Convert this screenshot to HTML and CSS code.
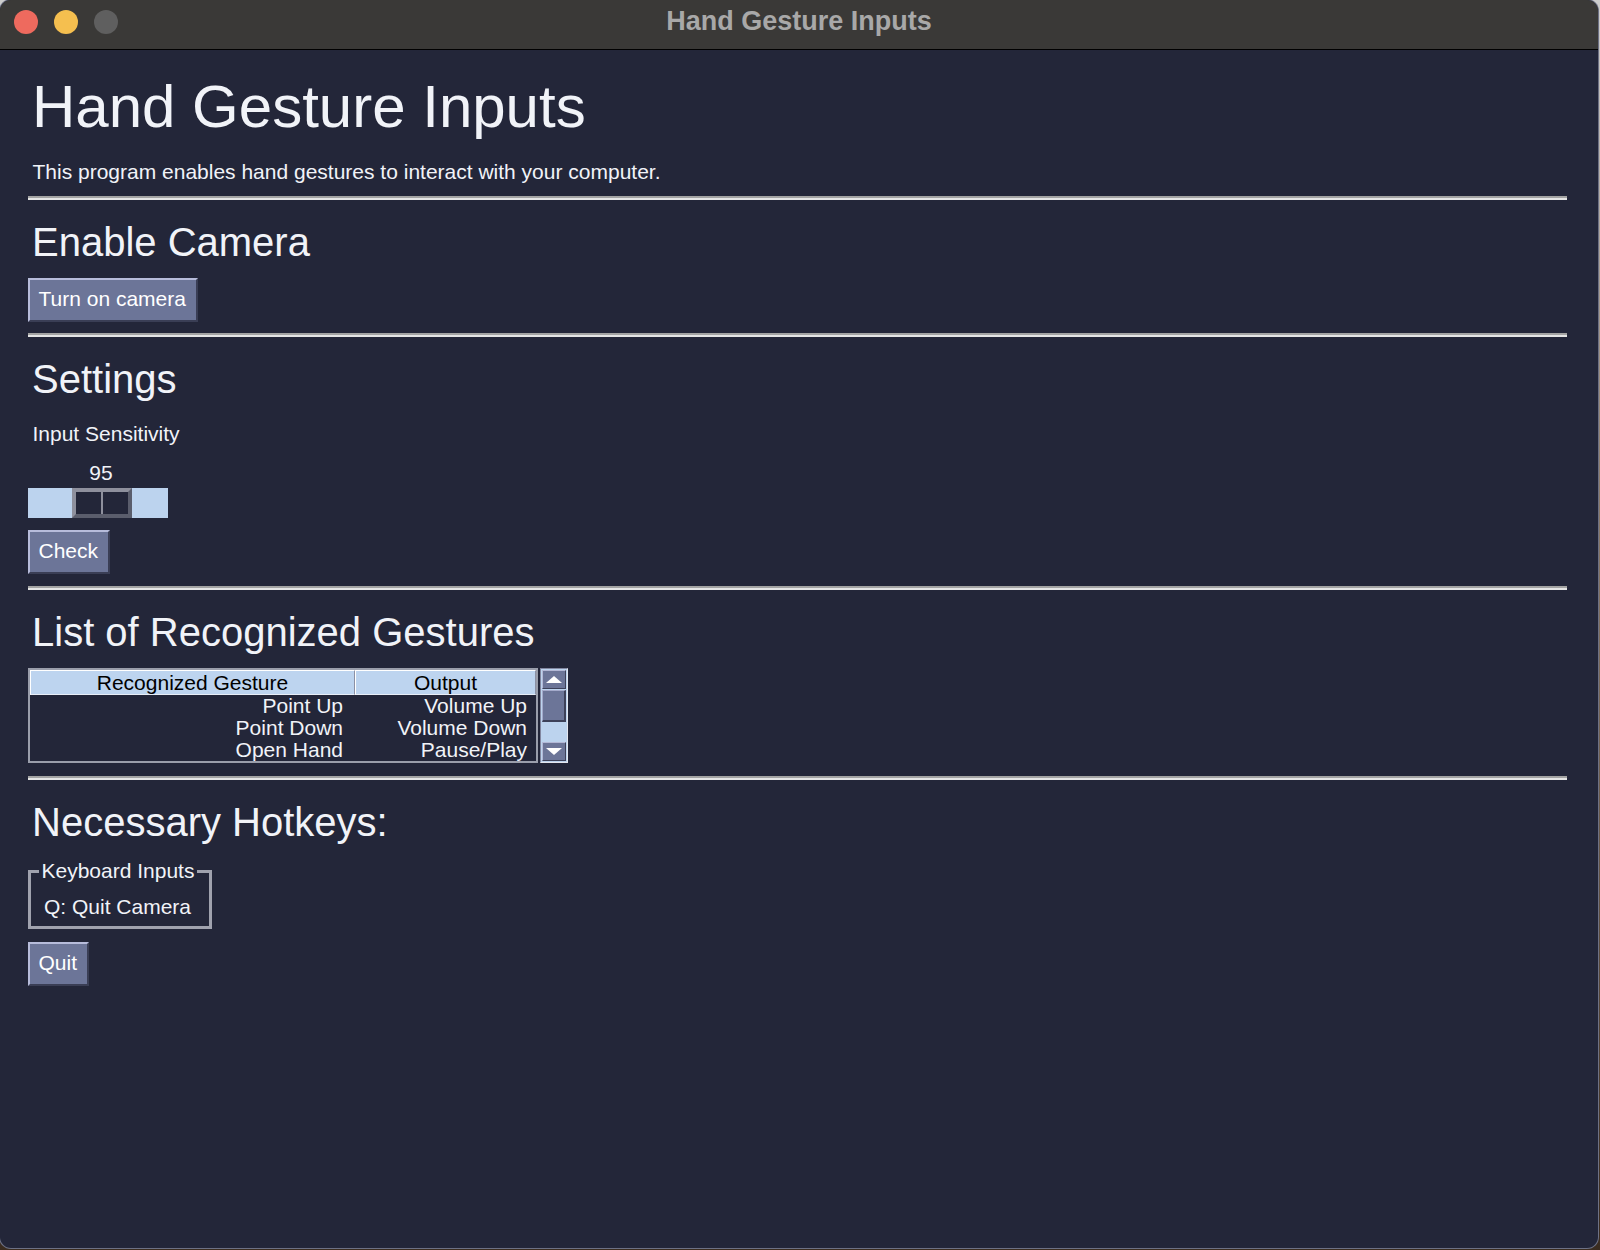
FILE: index.html
```html
<!DOCTYPE html>
<html lang="en">
<head>
<meta charset="utf-8">
<title>Hand Gesture Inputs</title>
<link rel="stylesheet" href="styles.css">
</head>
<body>
<div class="window">
  <div class="titlebar">
    <div class="lights">
      <span class="light red"></span>
      <span class="light yellow"></span>
      <span class="light gray"></span>
    </div>
    <div class="wtitle">Hand Gesture Inputs</div>
    <div></div>
  </div>
  <main class="content">
    <h1 class="main-title">Hand Gesture Inputs</h1>
    <p class="subtitle">This program enables hand gestures to interact with your computer.</p>
    <hr class="sep">
    <h2 class="section">Enable Camera</h2>
    <button class="btn">Turn on camera</button>
    <hr class="sep sep-tight">
    <h2 class="section">Settings</h2>
    <div class="label">Input Sensitivity</div>
    <div class="scale">
      <div class="scale-value">95</div>
      <div class="trough">
        <div class="handle"><span class="half"></span><span class="divider"></span><span class="half"></span></div>
      </div>
    </div>
    <button class="btn">Check</button>
    <hr class="sep">
    <h2 class="section">List of Recognized Gestures</h2>
    <div class="tree-wrap">
      <div class="tree">
        <div class="tree-head">
          <div class="th c1">Recognized Gesture</div>
          <div class="th c2">Output</div>
        </div>
        <div class="tree-row"><div class="td c1">Point Up</div><div class="td c2">Volume Up</div></div>
        <div class="tree-row"><div class="td c1">Point Down</div><div class="td c2">Volume Down</div></div>
        <div class="tree-row"><div class="td c1">Open Hand</div><div class="td c2">Pause/Play</div></div>
      </div>
      <div class="scrollbar">
        <div class="sb-btn"><span class="tri-up"></span></div>
        <div class="sb-thumb"></div>
        <div class="sb-space"></div>
        <div class="sb-btn"><span class="tri-down"></span></div>
      </div>
    </div>
    <hr class="sep sep-wide">
    <h2 class="section">Necessary Hotkeys:</h2>
    <fieldset class="hotkeys">
      <legend>Keyboard Inputs</legend>
      <div class="hotkey-item">Q: Quit Camera</div>
    </fieldset>
    <button class="btn btn-quit">Quit</button>
  </main>
</div>
</body>
</html>
```

FILE: styles.css
```css
html, body {
  margin: 0;
  padding: 0;
}

body {
  width: 1600px;
  height: 1250px;
  overflow: hidden;
  background: linear-gradient(#cdcdcd, #8a7a6a 40%, #3a2c20);
}

.window {
  width: 1598px;
  height: 1248px;
  border-radius: 11px;
  overflow: hidden;
  background: #232639;
  display: flex;
  flex-direction: column;
  box-shadow: 0 0 0 1px #6d7185;
}

.titlebar {
  height: 49px;
  flex: none;
  border-bottom: 1px solid #000;
  background: #3a3937;
  display: grid;
  grid-template-columns: 1fr auto 1fr;
  align-items: start;
}

.lights {
  display: flex;
  gap: 16px;
  padding: 10px 0 0 14px;
}

.light {
  width: 24px;
  height: 24px;
  border-radius: 50%;
}

.red { background: #ee6a5e; }
.yellow { background: #f5bf4f; }
.gray { background: #5f5f5f; }

.wtitle {
  font-family: "Liberation Sans", Arial, sans-serif;
  font-weight: bold;
  font-size: 27px;
  line-height: 27px;
  color: #a8a8a8;
  padding-top: 8px;
}

.content {
  flex: 1;
  display: flex;
  flex-direction: column;
  align-items: flex-start;
  padding: 22px 31px 0 28px;
  font-family: "Liberation Sans", Arial, sans-serif;
  font-size: 21px;
  line-height: 24px;
  color: #f1f3f8;
}

.main-title {
  margin: 0 0 0 4px;
  font-size: 60px;
  line-height: 70px;
  font-weight: normal;
}

.subtitle {
  margin: 18px 0 0 4.5px;
}

.sep {
  align-self: stretch;
  height: 0;
  margin: 12px 0 0 0;
  border: 0;
  border-top: 2px solid #a3a3a3;
  border-bottom: 2px solid #e5e5e5;
}

.sep-tight { margin-top: 11px; }
.sep-wide { margin-top: 13px; }

.section {
  margin: 18px 0 0 4px;
  font-size: 40px;
  line-height: 48px;
  font-weight: normal;
}

.btn {
  margin-top: 12px;
  height: 44px;
  box-sizing: border-box;
  padding: 0 10px 2px 8.5px;
  border: 2px solid;
  border-color: #b7bcdb #3a3e55 #3a3e55 #b7bcdb;
  background: #6c7598;
  color: #ffffff;
  font-family: "Liberation Sans", Arial, sans-serif;
  font-size: 21px;
  line-height: 24px;
  text-align: left;
  cursor: default;
}

.btn-quit { margin-top: 13px; }

.label {
  margin: 19px 0 0 4.5px;
}

.scale {
  margin-top: 15px;
  display: flex;
  flex-direction: column;
}

.scale-value {
  width: 60px;
  margin-left: 43px;
  text-align: center;
}

.trough {
  margin-top: 3px;
  width: 140px;
  height: 30px;
  background: #bcd3ee;
  display: flex;
}

.handle {
  margin-left: 44px;
  width: 60px;
  height: 30px;
  box-sizing: border-box;
  border: 4px solid;
  border-color: #8e909d #5a5d6c #5a5d6c #8e909d;
  background: #232639;
  display: flex;
}

.half {
  flex: 1;
}

.divider {
  width: 2px;
  background: #8e909d;
}

.tree-wrap {
  margin-top: 12px;
  display: flex;
  gap: 2px;
}

.tree {
  width: 510px;
  height: 95px;
  box-sizing: border-box;
  border: 2px solid #9a9eab;
}

.tree-head {
  display: flex;
  height: 25px;
}

.th {
  box-sizing: border-box;
  background: #bdd4ef;
  color: #000;
  text-align: center;
  line-height: 23px;
  border-top: 1px solid #ffffff;
  border-left: 1px solid #ffffff;
  border-right: 1px solid #8b90a4;
  border-bottom: 1px solid #e8eef8;
  white-space: nowrap;
}

.c1 { width: 325px; }
.c2 { width: 181px; }

.tree-row {
  display: flex;
  height: 22px;
  line-height: 22px;
}

.td {
  box-sizing: border-box;
  text-align: right;
  white-space: nowrap;
}

.td.c1 { padding-right: 12px; }
.td.c2 { padding-right: 9px; }

.scrollbar {
  width: 28px;
  height: 95px;
  box-sizing: border-box;
  border: 1px solid;
  border-color: #8287a0 #e3e6ef #e3e6ef #8287a0;
  padding: 1px;
  background: #bcd3ee;
  display: flex;
  flex-direction: column;
}

.sb-btn {
  height: 19px;
  box-sizing: border-box;
  background: #6c7598;
  border: 1px solid;
  border-color: #b3b8d6 #3d4159 #3d4159 #b3b8d6;
  display: flex;
  align-items: center;
  justify-content: center;
}

.tri-up {
  width: 0;
  height: 0;
  border-left: 8px solid transparent;
  border-right: 8px solid transparent;
  border-bottom: 7px solid #ffffff;
}

.tri-down {
  width: 0;
  height: 0;
  border-left: 8px solid transparent;
  border-right: 8px solid transparent;
  border-top: 7px solid #ffffff;
}

.sb-thumb {
  margin-top: 1px;
  height: 32px;
  box-sizing: border-box;
  background: #6c7598;
  border: 1px solid;
  border-color: #a4aacb #3d4159 #3d4159 #a4aacb;
  border-width: 1px 2px 2px 1px;
}

.sb-space {
  flex: 1;
}

.hotkeys {
  margin: 13px 0 0 0;
  padding: 12px 18px 7px 13px;
  width: 147px;
  min-width: 0;
  border: 3px solid #a0a2ae;
}

.hotkeys legend {
  padding: 0 3px;
  margin-left: -5.5px;
  font-size: 21px;
  line-height: 24px;
  white-space: nowrap;
}

.hotkey-item {
  white-space: nowrap;
}
```
